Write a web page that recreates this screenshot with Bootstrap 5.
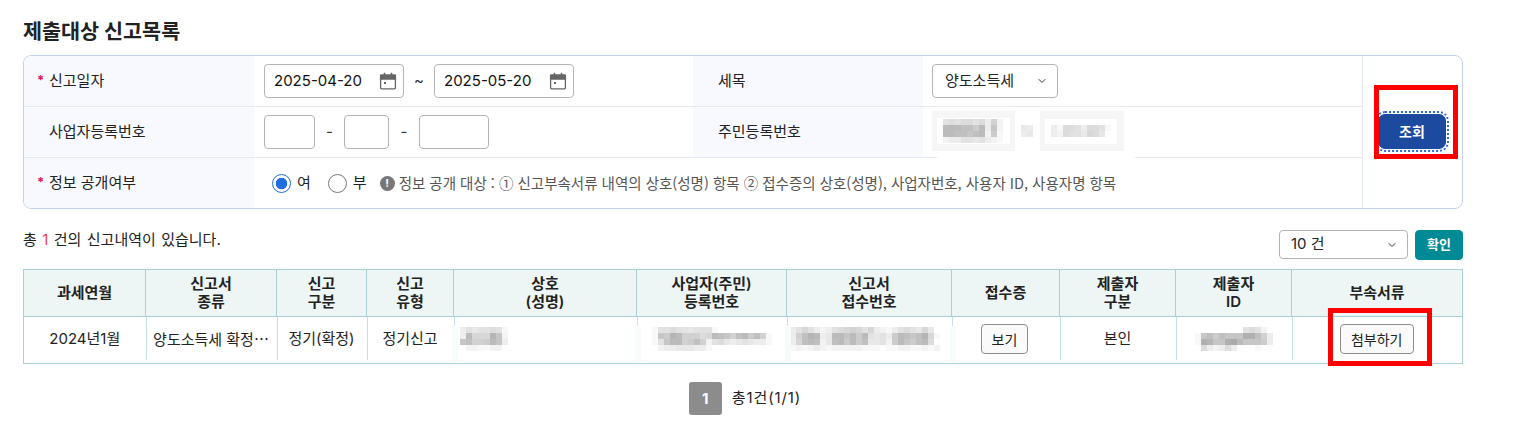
<!DOCTYPE html>
<html lang="ko">
<head>
<meta charset="UTF-8" />
<meta name="viewport" content="width=device-width, initial-scale=1.0" />
<title>제출대상 신고목록</title>
<link href="https://cdn.jsdelivr.net/npm/bootstrap@5.3.0/dist/css/bootstrap.min.css" rel="stylesheet" />
<style>
  body { font-family: Inter, "Noto Sans CJK KR", sans-serif; font-size: 15px; color: #222; background: #fff; }
  .page-wrap { position: relative; width: 1440px; height: 427px; margin-left: 23px; padding-top: 18px; }
  .page-title { font-size: 20.7px; font-weight: 700; line-height: 28px; margin: 0 0 9px; color: #222; }

  .search-box { border: 1px solid #c3d3ee; border-radius: 8px; height: 154px; overflow: hidden; }
  .search-rows { width: 1339px; border-right: 1px solid #e3e9f5; }
  .search-row { height: 51px; border-bottom: 1px solid #e3e9f5; }
  .search-row:last-child { border-bottom: 0; height: 50px; }
  .lbl { background: #f7f9fe; padding-left: 25px; position: relative; }
  .lbl-a { width: 230px; }
  .lbl-b { width: 230px; }
  .val-a { width: 439px; padding-left: 10px; }
  .val-b { padding-left: 9px; }
  .req { position: absolute; left: 13px; color: #e6125d; font-size: 13px; font-weight: 700; }
  .field { height: 34px; border-color: #b4b4b4; border-radius: 4px; font-size: 15px; padding: 0 6px 0 9px; color: #111; box-shadow: none; }
  .date-field { width: 140px; }
  .date-field span { flex: 1; }
  .bn-1 { width: 51px; }
  .bn-2 { width: 45px; }
  .bn-3 { width: 70px; }
  .sep { text-align: center; color: #333; }
  .sep-date { width: 30px; }
  .sep-bn { width: 29px; }
  .sep-bn2 { width: 30px; }
  .sel-tax { width: 126px; height: 34px; font-size: 15px; padding: 0 20px 0 12px; border-color: #b4b4b4; border-radius: 4px; background-size: 10px 8px; background-position: right 10px center; }
  .jumin-mask { display: block; margin: 1px 0 0 0; overflow: visible; }

  .radio-item { margin: 0; min-height: 0; padding: 0; gap: 6px; }
  .radio-item .form-check-input { width: 19px; height: 19px; margin: 0; float: none; border-color: #777; }
  .radio-item .form-check-input:checked { background-color: #fff; border-color: #1f6fe0; background-image: radial-gradient(circle, #1f6fe0 0 5.5px, transparent 6px); }
  .radio-a { margin-left: 8px; }
  .radio-b { margin-left: 17px; }
  .info-dot { width: 15px; height: 15px; border-radius: 50%; background: #777; color: #fff; font-size: 11px; font-weight: 700; line-height: 15px; text-align: center; margin: 0 4px 0 13px; }
  .info-text { font-family: "Noto Sans CJK KR", sans-serif; font-size: 14.5px; color: #555; white-space: nowrap; }

  .btn-col { width: 99px; }
  .btn-search { position: relative; width: 68px; height: 35px; margin-left: 15px; margin-top: -1px; padding: 0; background: #1c4a9f; border-color: #1c4a9f; color: #fff; font-size: 14px; font-weight: 700; border-radius: 7px; outline: 2px dotted #2a68e0; outline-offset: 1px; }

  .list-head { height: 60px; padding-top: 11px; }
  .total-text { font-size: 15px; margin-top: -9px; word-spacing: 1.2px; }
  .total-num { color: #f04050; }
  .sel-count { width: 129px; height: 29px; font-size: 15px; padding: 0 24px 0 11px; border-color: #b4b4b4; border-radius: 4px; background-size: 10px 8px; background-position: right 10px center; }
  .btn-ok { width: 48px; height: 30px; padding: 0; margin-left: 7px; background: #008a96; border-color: #008a96; color: #fff; font-size: 13px; font-weight: 700; border-radius: 4px; }

  .list-table { table-layout: fixed; width: 1439px; margin: 0; border-collapse: collapse; border: 1px solid #a9d0d4; font-size: 15px; --bs-table-border-color: #a9d0d4; }
  .list-table th { background: #edf6f5; height: 47px; padding: 0 2px; font-weight: 600; font-size: 15px; line-height: 18.5px; text-align: center; vertical-align: middle; border: 1px solid #a9d0d4; color: #222; }
  .list-table td { height: 47px; padding: 0 6px 2px; text-align: center; vertical-align: middle; border: 0; position: relative; color: #222; white-space: nowrap; }
  .list-table td + td::before { content: ""; position: absolute; left: 0; top: 0; bottom: 3px; border-left: 1px solid #c5e0e6; }
  .list-table td.cut-line::before { bottom: auto; height: 9px; }
  .list-table td.cut-line::after { content: ""; position: absolute; left: -2px; top: 10px; bottom: 2px; width: 6px; background: #f7fbfb; }
  .list-table td.kind-cell { font-family: "Noto Sans CJK SC", sans-serif; }
  .list-table td.view-cell { padding: 0 7px 2px 5px; }
  .c1 { width: 122px; } .c2 { width: 131px; } .c3 { width: 90px; } .c4 { width: 87px; }
  .c5 { width: 183px; } .c6 { width: 150px; } .c7 { width: 165px; } .c8 { width: 108px; }
  .c9 { width: 116px; } .c10 { width: 116px; } .c11 { width: 171px; }
  .btn-mini { height: 30px; padding: 0 10px; font-size: 14px; color: #222; background: #fafafa; border: 1px solid #8e8e8e; border-radius: 4px; }

  .pager { margin-top: 18px; padding-left: 4px; gap: 10px; font-size: 15px; }
  .pager-text { letter-spacing: .9px; }
  .page-num { width: 33px; height: 33px; line-height: 33px; text-align: center; background: #8c8c8c; color: #fff; font-weight: 700; border-radius: 3px; }

  .blur-cell { display: block; }
  .blur-receipt { margin-left: -3px; }
  .mark-red { position: absolute; border: 5px solid #ff0000; pointer-events: none; }
  .mark-search { left: 1351px; top: 85px; width: 84px; height: 74px; }
  .mark-attach { left: 1305px; top: 308px; width: 104px; height: 58px; }
</style>
</head>
<body>
<div class="page-wrap">
  <h1 class="page-title">제출대상 신고목록</h1>

  <div class="search-box d-flex">
    <div class="search-rows flex-shrink-0">
      <div class="search-row d-flex">
        <div class="lbl lbl-a d-flex align-items-center"><span class="req">*</span>신고일자</div>
        <div class="val-a d-flex align-items-center">
          <div class="form-control field date-field d-flex align-items-center">
            <span>2025-04-20</span>
            <svg width="18" height="18" viewBox="0 0 18 18" fill="none" stroke="#666" stroke-width="1.3"><rect x="1.6" y="3.2" width="14.8" height="13.6" rx="1"/><path d="M1.6 3.2h14.8v3.8H1.6z" fill="#666"/><path d="M5.5 .8v3M12.5 .8v3" stroke-width="1.5"/><rect x="5" y="10" width="2" height="2" fill="#666" stroke="none"/></svg>
          </div>
          <span class="sep sep-date">~</span>
          <div class="form-control field date-field d-flex align-items-center">
            <span>2025-05-20</span>
            <svg width="18" height="18" viewBox="0 0 18 18" fill="none" stroke="#666" stroke-width="1.3"><rect x="1.6" y="3.2" width="14.8" height="13.6" rx="1"/><path d="M1.6 3.2h14.8v3.8H1.6z" fill="#666"/><path d="M5.5 .8v3M12.5 .8v3" stroke-width="1.5"/><rect x="5" y="10" width="2" height="2" fill="#666" stroke="none"/></svg>
          </div>
        </div>
        <div class="lbl lbl-b d-flex align-items-center">세목</div>
        <div class="val-b d-flex align-items-center">
          <select class="form-select sel-tax"><option>양도소득세</option></select>
        </div>
      </div>
      <div class="search-row d-flex">
        <div class="lbl lbl-a d-flex align-items-center">사업자등록번호</div>
        <div class="val-a d-flex align-items-center">
          <input type="text" class="form-control field bn-1" />
          <span class="sep sep-bn">-</span>
          <input type="text" class="form-control field bn-2" />
          <span class="sep sep-bn2">-</span>
          <input type="text" class="form-control field bn-3" />
        </div>
        <div class="lbl lbl-b d-flex align-items-center">주민등록번호</div>
        <div class="val-b">
          <svg class="jumin-mask" width="204" height="50" shape-rendering="crispEdges" aria-hidden="true">
            <rect x="0" y="3" width="83" height="40" fill="#f6f6f6"/><rect x="5" y="10" width="73" height="26" fill="#fff"/>
            <rect x="108" y="3" width="84" height="40" fill="#f6f6f6"/><rect x="113" y="11" width="72" height="25" fill="#fff"/>
            <rect x="5" y="47" width="198" height="3" fill="#fff"/>
            <g data-blur="11,11" data-rows="a9a99a9c7d|3334463c5d|3344543d6e|dccaabacde"></g>
            <g data-blur="89,17" data-rows="bc|cb"></g>
            <g data-blur="119,17" data-rows="ce99ac99ae|cd9aab89bf"></g>
          </svg>
        </div>
      </div>
      <div class="search-row d-flex">
        <div class="lbl lbl-a d-flex align-items-center"><span class="req">*</span>정보 공개여부</div>
        <div class="val-a d-flex align-items-center flex-grow-1">
          <label class="form-check radio-item radio-a d-flex align-items-center">
            <input class="form-check-input" type="radio" name="openYn" checked />여
          </label>
          <label class="form-check radio-item radio-b d-flex align-items-center">
            <input class="form-check-input" type="radio" name="openYn" />부
          </label>
          <span class="info-dot">!</span>
          <span class="info-text">정보 공개 대상 : ① 신고부속서류 내역의 상호(성명) 항목 ② 접수증의 상호(성명), 사업자번호, 사용자 ID, 사용자명 항목</span>
        </div>
      </div>
    </div>
    <div class="btn-col d-flex align-items-center">
      <button type="button" class="btn btn-search">조회</button>
    </div>
  </div>

  <div class="list-head d-flex justify-content-between align-items-center">
    <div class="total-text">총 <span class="total-num">1</span> 건의 신고내역이 있습니다.</div>
    <div class="d-flex align-items-center">
      <select class="form-select sel-count"><option>10 건</option></select>
      <button type="button" class="btn btn-ok">확인</button>
    </div>
  </div>

  <table class="table list-table">
    <colgroup>
      <col class="c1" /><col class="c2" /><col class="c3" /><col class="c4" /><col class="c5" /><col class="c6" /><col class="c7" /><col class="c8" /><col class="c9" /><col class="c10" /><col class="c11" />
    </colgroup>
    <thead>
      <tr>
        <th>과세연월</th><th>신고서<br />종류</th><th>신고<br />구분</th><th>신고<br />유형</th><th>상호<br />(성명)</th><th>사업자(주민)<br />등록번호</th><th>신고서<br />접수번호</th><th>접수증</th><th>제출자<br />구분</th><th>제출자<br />ID</th><th>부속서류</th>
      </tr>
    </thead>
    <tbody>
      <tr>
        <td>2024년1월</td>
        <td class="kind-cell">양도소득세 확정…</td>
        <td>정기(확정)</td>
        <td>정기신고</td>
        <td class="cut-line">
          <svg class="blur-cell" width="48" height="24" shape-rendering="crispEdges"><g data-blur="0,0" data-rows="cabaa9ae|c388825d|5477635c|.ddeeddf"></g></svg>
        </td>
        <td class="cut-line">
          <svg class="blur-cell mx-auto" width="120" height="24" shape-rendering="crispEdges"><g data-blur="0,0" data-rows="eaa9aabaaae|e56237779834574364 7e|ea53376 47da9bcbabcce|.dccbbbcce"></g></svg>
        </td>
        <td class="cut-line">
          <svg class="blur-cell blur-receipt" width="150" height="24" shape-rendering="crispEdges"><g data-blur="0,0" data-rows="ca8acdca9878a8cdeca9ab8b|c7423cb33536 3abac634542 8ee|c8434db43636 4bbad635643 9fe|ededcdedddddeeefeeddeeded"></g></svg>
        </td>
        <td class="cut-line view-cell"><button type="button" class="btn btn-mini">보기</button></td>
        <td>본인</td>
        <td>
          <svg class="blur-cell mx-auto" width="78" height="24" shape-rendering="crispEdges"><g data-blur="0,0" data-rows="........a9adf|e546455511 47c|e1255103 5556c|f9cdc9cfffeff"></g></svg>
        </td>
        <td><button type="button" class="btn btn-mini">첨부하기</button></td>
      </tr>
    </tbody>
  </table>

  <div class="pager d-flex justify-content-center align-items-center">
    <span class="page-num">1</span>
    <span class="pager-text">총1건(1/1)</span>
  </div>

  <div class="mark-red mark-search"></div>
  <div class="mark-red mark-attach"></div>
</div>
<script src="https://cdn.jsdelivr.net/npm/bootstrap@5.3.0/dist/js/bootstrap.bundle.min.js"></script>
<script>
  // 개인정보 가림 처리: 6px 격자, 글자 하나가 회색 단계 하나
  document.querySelectorAll('[data-blur]').forEach(function (g) {
    var origin = g.dataset.blur.split(',').map(Number);
    g.dataset.rows.split('|').forEach(function (row, r) {
      row.replace(/ /g, '').split('').forEach(function (ch, c) {
        if (ch === '.') return;
        var v = Math.round(170 + parseInt(ch, 16) * 5.6);
        var rect = document.createElementNS('http://www.w3.org/2000/svg', 'rect');
        rect.setAttribute('x', origin[0] + c * 6);
        rect.setAttribute('y', origin[1] + r * 6);
        rect.setAttribute('width', 6);
        rect.setAttribute('height', 6);
        rect.setAttribute('fill', 'rgb(' + v + ',' + v + ',' + v + ')');
        g.appendChild(rect);
      });
    });
  });
</script>
</body>
</html>
